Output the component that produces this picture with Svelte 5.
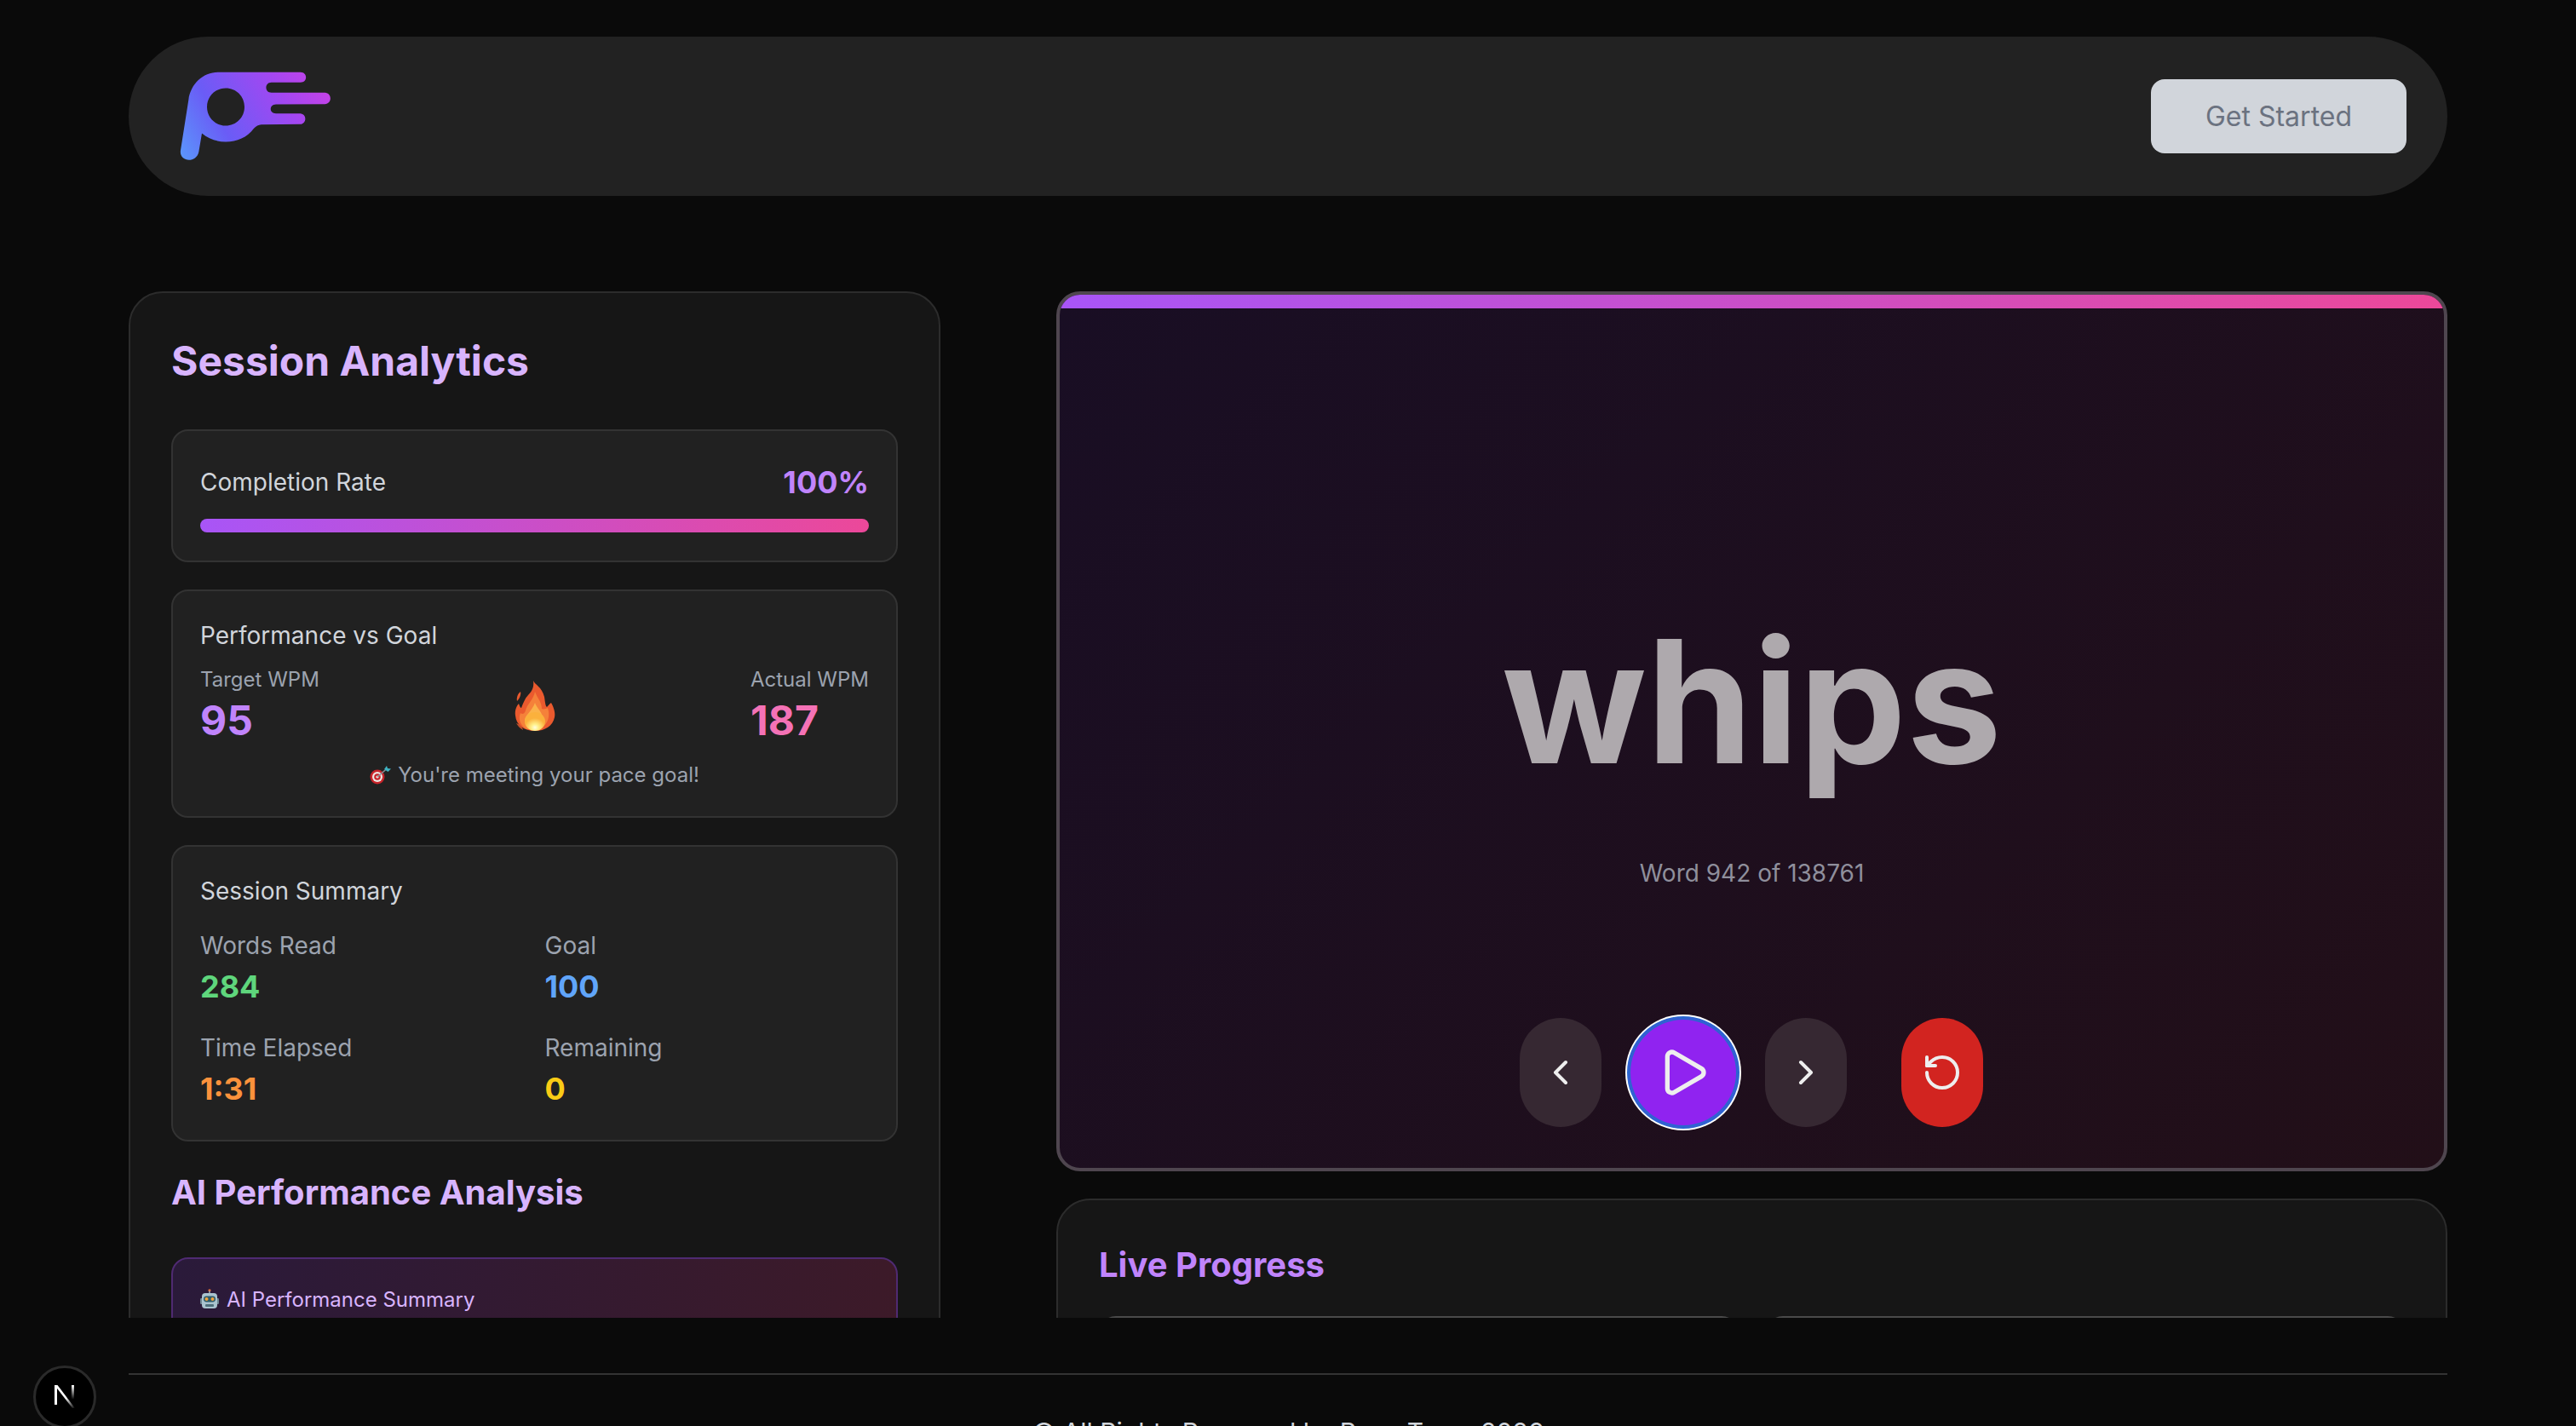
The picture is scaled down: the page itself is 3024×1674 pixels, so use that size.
<script>
  const summary = [
    { label: 'Words Read', value: '284', tone: 'green' },
    { label: 'Goal', value: '100', tone: 'blue' },
    { label: 'Time Elapsed', value: '1:31', tone: 'orange' },
    { label: 'Remaining', value: '0', tone: 'yellow' }
  ];
</script>

<div class="page">
  <header class="topbar">
    <svg class="logo" viewBox="210 160 540 320" aria-label="Logo">
      <defs>
        <linearGradient id="logoGrad" gradientUnits="userSpaceOnUse" x1="225" y1="470" x2="735" y2="170">
          <stop offset="0" stop-color="#5b95fb" />
          <stop offset="0.3" stop-color="#6a5cf6" />
          <stop offset="0.7" stop-color="#a347f1" />
          <stop offset="1" stop-color="#cb41e6" />
        </linearGradient>
      </defs>
      <path
        fill="url(#logoGrad)"
        fill-rule="evenodd"
        d="M216 440 L244 262 C252 205 295 165 350 165 L638 165 C664 165 664 201 638 201 L536 201 C511 201 511 237 536 237 L724 237 C750 238 750 276 724 277 L552 278 C527 279 527 310 552 310 L637 310 C661 311 661 347 637 348 L500 349 C490 350 482 354 474 363 C450 395 415 410 375 410 C345 410 315 400 291 380 L280 445 C272 486 210 482 216 440 Z M375 221 C338 221 309 250 309 287 C309 324 338 353 375 353 C412 353 441 324 441 287 C441 250 412 221 375 221 Z"
      />
    </svg>
    <button class="start" type="button">Get Started</button>
  </header>

  <main class="workspace">
    <aside class="analytics">
      <h2 class="title-lg">Session Analytics</h2>

      <section class="card">
        <div class="rate-row">
          <span class="card-title">Completion Rate</span>
          <span class="rate">100%</span>
        </div>
        <div class="bar"></div>
      </section>

      <section class="card">
        <div class="card-title">Performance vs Goal</div>
        <div class="goal-row">
          <div>
            <div class="mini-label">Target WPM</div>
            <div class="wpm purple">95</div>
          </div>
          <svg class="fire" viewBox="0 0 48 61" aria-hidden="true">
            <defs>
              <radialGradient id="core" cx="0.5" cy="0.82" r="0.5">
                <stop offset="0" stop-color="#fffde0" />
                <stop offset="0.35" stop-color="#fff08a" />
                <stop offset="1" stop-color="#fbb13c" />
              </radialGradient>
            </defs>
            <path fill="#ea5a2e" d="M22 1 C24 6 32 8 35 20 C36 26 36 30 38 32 C40 30 41 28 43 27 C47 34 48 40 47 44 C45 54 36 60 24 60 C11 60 2 53 1 42 C0 35 3 30 5 28 C6 31 7 33 8 33 C10 28 12 22 16 18 C21 13 23 8 22 1 Z" />
            <path fill="#ea5a2e" d="M7 14 C8 17 6 22 3 25 C2 21 4 16 7 14 Z" />
            <path fill="#f5813a" d="M24 14 C27 22 32 26 32 34 C34 35 37 34 39 33 C42 42 40 52 30 58 L14 58 C7 54 4 46 7 39 C9 41 12 40 13 36 C15 28 22 24 24 14 Z" />
            <path fill="#fbb24a" d="M24 27 C26 33 32 37 33 44 C34 51 30 57 24 59 C16 58 11 53 12 47 C13 41 21 36 24 27 Z" />
            <ellipse fill="url(#core)" cx="24" cy="49" rx="12" ry="11" />
            <path fill="#ea5a2e" d="M2 51 C6 52 9 55 10 59 C6 57 4 54 2 51 Z" opacity="0.8" />
          </svg>
          <div>
            <div class="mini-label">Actual WPM</div>
            <div class="wpm pink">187</div>
          </div>
        </div>
        <div class="goal-note">
          <svg class="dart" viewBox="0 0 25 22" aria-hidden="true">
            <circle cx="9" cy="13" r="8.500" fill="#c8242a" />
            <circle cx="9" cy="13" r="6" fill="#efe8e4" />
            <circle cx="9" cy="13" r="3.800" fill="#c8242a" />
            <circle cx="9" cy="13" r="1.600" fill="#efe8e4" />
            <path d="M9 13 L20 3.500" stroke="#8a8f96" stroke-width="1.600" />
            <path d="M17 4 L20 0 L21 3 L25 3.500 L21.500 7 Z" fill="#3fb3c2" />
          </svg>
          <span>You're meeting your pace goal!</span>
        </div>
      </section>

      <section class="card">
        <div class="card-title summary-title">Session Summary</div>
        <div class="summary-grid">
          {#each summary as item}
            <div>
              <div class="sum-label">{item.label}</div>
              <div class="sum-value {item.tone}">{item.value}</div>
            </div>
          {/each}
        </div>
      </section>

      <h3 class="title-md">AI Performance Analysis</h3>

      <section class="ai-card">
        <svg class="robot" viewBox="0 0 22 24" aria-hidden="true">
          <circle cx="11" cy="1.800" r="1.600" fill="#e2703a" />
          <rect x="10.200" y="2.500" width="1.600" height="3" fill="#9aa3ad" />
          <rect x="0" y="11" width="3" height="7" rx="1.200" fill="#6f8793" />
          <rect x="19" y="11" width="3" height="7" rx="1.200" fill="#6f8793" />
          <rect x="2" y="5" width="18" height="18" rx="4" fill="#a9c3cf" />
          <rect x="4" y="8.500" width="14" height="7" rx="3.400" fill="#2f5d6b" />
          <circle cx="7.500" cy="12" r="2" fill="#f2a33c" />
          <circle cx="14.500" cy="12" r="2" fill="#f2a33c" />
          <rect x="6" y="18" width="10" height="3" rx="1" fill="#4f6f7c" />
        </svg>
        <span>AI Performance Summary</span>
      </section>
    </aside>

    <div class="reader-column">
      <section class="reader">
        <div class="reader-strip"></div>
        <div class="reader-body">
          <div class="word">whips</div>
          <div class="counter">Word 942 of 138761</div>
          <div class="controls">
            <button class="ctl side" type="button" aria-label="Previous">
              <svg class="ico" viewBox="0 0 24 24"><path d="m15 18-6-6 6-6" /></svg>
            </button>
            <button class="ctl play" type="button" aria-label="Play">
              <svg class="ico large" viewBox="0 0 24 24"><path d="M5 5a2 2 0 0 1 3.008-1.728l11.997 6.998a2 2 0 0 1 .003 3.458l-12 7A2 2 0 0 1 5 19z" /></svg>
            </button>
            <button class="ctl side" type="button" aria-label="Next">
              <svg class="ico" viewBox="0 0 24 24"><path d="m9 18 6-6-6-6" /></svg>
            </button>
            <button class="ctl reset" type="button" aria-label="Restart">
              <svg class="ico" viewBox="0 0 24 24"><path d="M3 12a9 9 0 1 0 9-9 9.750 9.750 0 0 0-6.740 2.740L3 8" /><path d="M3 3v5h5" /></svg>
            </button>
          </div>
        </div>
      </section>

      <section class="live">
        <h3 class="live-title">Live Progress</h3>
        <div class="live-grid">
          <div class="live-cell"></div>
          <div class="live-cell"></div>
        </div>
      </section>
    </div>
  </main>

  <footer class="foot">© All Rights Reserved by Pace Team 2026</footer>

  <div class="next-badge">
    <svg viewBox="0 0 28 30" aria-hidden="true">
      <defs>
        <linearGradient id="nDiag" x1="0" y1="0" x2="1" y2="1">
          <stop offset="0.55" stop-color="#fff" />
          <stop offset="1" stop-color="#fff" stop-opacity="0" />
        </linearGradient>
        <linearGradient id="nBar" x1="0" y1="0" x2="0" y2="1">
          <stop offset="0" stop-color="#fff" />
          <stop offset="0.8" stop-color="#fff" stop-opacity="0" />
        </linearGradient>
      </defs>
      <path d="M2 1 H5 V24 H2 Z" fill="#fff" />
      <path d="M2 1 H5.500 L26 28 H23 Z" fill="url(#nDiag)" />
      <path d="M22 1 H25 V22 H22 Z" fill="url(#nBar)" />
    </svg>
  </div>
</div>

<style>
  :global(html), :global(body) {
    margin: 0;
    background: #0a0a0a;
    overflow: hidden;
  }

  .page {
    position: relative;
    height: 1674px;
    overflow: hidden;
    box-sizing: border-box;
    padding: 43px 151px 0;
    background: #0a0a0a;
    font-family: Inter, "Liberation Sans", sans-serif;
    color: #d1d5db;
  }

  .topbar {
    display: flex;
    align-items: center;
    justify-content: space-between;
    height: 187px;
    box-sizing: border-box;
    padding: 0 48px 0 59px;
    border-radius: 94px;
    background: #222222;
  }

  .logo { width: 180px; height: 107px; display: block; }

  .start {
    width: 300px;
    height: 87px;
    border: 0;
    border-radius: 16px;
    background: #d1d5db;
    color: #6b7280;
    font: 400 32px/1 Inter, sans-serif;
  }

  .workspace {
    display: grid;
    grid-template-columns: 953px 1633px;
    column-gap: 136px;
    align-items: start;
    height: 1205px;
    margin-top: 112px;
    overflow: hidden;
  }

  .analytics {
    box-sizing: border-box;
    padding: 48px;
    border: 2px solid #2c2c2c;
    border-radius: 40px;
    background: #161616;
  }

  .title-lg {
    margin: 0 0 48px;
    font-size: 48px;
    line-height: 64px;
    font-weight: 700;
    color: #d8b4fe;
  }

  .card {
    box-sizing: border-box;
    padding: 32px;
    margin-bottom: 32px;
    border: 2px solid #333333;
    border-radius: 20px;
    background: #212121;
  }

  .card:nth-of-type(1) { padding-bottom: 33px; }

  .card-title {
    font-size: 28px;
    line-height: 40px;
    color: #d1d5db;
  }

  .rate-row {
    display: flex;
    align-items: center;
    justify-content: space-between;
    height: 55px;
    margin-bottom: 16px;
  }

  .rate {
    font-size: 36px;
    font-weight: 700;
    color: #c084fc;
  }

  .bar {
    height: 16px;
    border-radius: 8px;
    background: linear-gradient(90deg, #a855f7, #ec4899);
  }

  .goal-row {
    display: flex;
    align-items: center;
    justify-content: space-between;
    margin-top: 16px;
  }

  .mini-label {
    font-size: 24px;
    line-height: 32px;
    color: #9ca3af;
  }

  .wpm {
    font-size: 48px;
    line-height: 64px;
    font-weight: 700;
  }

  .purple { color: #c084fc; }
  .pink { color: #f472b6; }
  .green { color: #5fd67c; }
  .blue { color: #60a5fa; }
  .orange { color: #fb923c; }
  .yellow { color: #facc15; }

  .fire { width: 48px; height: 61px; display: block; margin-top: -3px; }

  .goal-note {
    display: flex;
    align-items: center;
    justify-content: center;
    gap: 8px;
    margin-top: 16px;
    font-size: 24px;
    line-height: 32px;
    color: #9ca3af;
  }

  .dart { width: 25px; height: 22px; display: block; }

  .summary-title { margin-bottom: 24px; }

  .summary-grid {
    display: grid;
    grid-template-columns: 1fr 1fr;
    gap: 24px;
  }

  .sum-label {
    font-size: 28px;
    line-height: 40px;
    color: #9ca3af;
  }

  .sum-value {
    font-size: 36px;
    line-height: 56px;
    font-weight: 700;
  }

  .title-md {
    margin: 0 0 48px;
    font-size: 40px;
    line-height: 56px;
    font-weight: 700;
    color: #d8b4fe;
  }

  .ai-card {
    display: flex;
    align-items: flex-start;
    gap: 9px;
    height: 200px;
    box-sizing: border-box;
    padding: 32px;
    border: 2px solid #4f2a72;
    border-radius: 20px;
    background: linear-gradient(100deg, #2a1a3a, #3d1a28);
    font-size: 24px;
    line-height: 32px;
    color: #d8b4fe;
  }

  .robot { width: 22px; height: 24px; margin-top: 3px; display: block; }

  .reader-column {
    display: flex;
    flex-direction: column;
    gap: 32px;
  }

  .reader {
    overflow: hidden;
    border: 4px solid #4f464f;
    border-radius: 28px;
    background: linear-gradient(135deg, #190e24, #220f18);
  }

  .reader-strip {
    height: 16px;
    background: linear-gradient(90deg, #a855f7, #ec4899);
  }

  .reader-body {
    display: flex;
    flex-direction: column;
    align-items: center;
    padding: 365px 0 48px;
  }

  .word {
    font-size: 200px;
    line-height: 192px;
    font-weight: 700;
    color: #aea9ad;
  }

  .counter {
    margin-top: 86px;
    font-size: 28px;
    line-height: 40px;
    color: #8f8f9c;
  }

  .controls {
    display: flex;
    gap: 32px;
    margin-top: 150px;
    margin-right: 1px;
  }

  .ctl {
    display: flex;
    align-items: center;
    justify-content: center;
    width: 96px;
    height: 128px;
    padding: 0;
    border: 0;
    border-radius: 48px;
  }

  .side { background: #362832; }

  .play {
    width: 128px;
    border-radius: 50%;
    background: #9023f0;
    box-shadow: inset 0 0 0 2px #2a66d0, 0 0 0 2px #2a66d0, 0 0 0 4px #ffffff;
  }

  .reset {
    margin-left: 32px;
    background: #d22420;
  }

  .ico {
    width: 48px;
    height: 48px;
    fill: none;
    stroke: #eeeeee;
    stroke-width: 2;
    stroke-linecap: round;
    stroke-linejoin: round;
  }

  .ico.large { width: 64px; height: 64px; }

  .live {
    box-sizing: border-box;
    padding: 48px;
    border: 2px solid #2c2c2c;
    border-radius: 40px;
    background: #161616;
  }

  .live-title {
    margin: 0 0 32px;
    font-size: 40px;
    line-height: 56px;
    font-weight: 700;
    color: #c084fc;
  }

  .live-grid {
    display: grid;
    grid-template-columns: 1fr 1fr;
    gap: 32px;
  }

  .live-cell {
    height: 240px;
    border: 2px solid #4a4a4a;
    border-radius: 20px;
    background: #212121;
  }

  .foot {
    margin-top: 65px;
    padding-top: 47px;
    border-top: 2px solid #333333;
    text-align: center;
    font-size: 30px;
    line-height: 40px;
    color: #d1d5db;
  }

  .next-badge {
    position: absolute;
    left: 39px;
    top: 1603px;
    display: flex;
    align-items: center;
    justify-content: center;
    width: 74px;
    height: 74px;
    box-sizing: border-box;
    border: 3px solid #2a2a2a;
    border-radius: 50%;
    background: #000000;
  }

  .next-badge svg { width: 28px; height: 30px; display: block; }
</style>
